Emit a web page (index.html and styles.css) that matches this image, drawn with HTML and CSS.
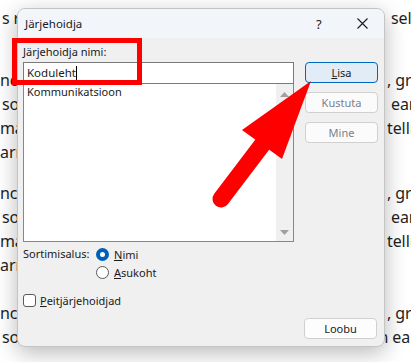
FILE: index.html
```html
<!DOCTYPE html>
<html lang="et">
<head>
  <meta charset="UTF-8">
  <meta name="viewport" content="width=device-width, initial-scale=1.0">
  <title>Järjehoidja</title>
  <link rel="stylesheet" href="styles.css">
</head>
<body>

<!-- document behind the dialog -->
<div class="doc">
  <div class="para first">
    <div class="line"><span class="left pad">s r</span><span class="right">&nbsp;self</span></div>
  </div>
  <div class="para">
    <div class="line"><span class="left">nce</span><span class="right">, grunts</span></div>
    <div class="line"><span class="left pad">sou</span><span class="right">&nbsp;ears</span></div>
    <div class="line"><span class="left">many</span><span class="right">telligent</span></div>
    <div class="line"><span class="left">arn</span><span class="right"></span></div>
  </div>
  <div class="para">
    <div class="line"><span class="left">nce</span><span class="right">, grunts</span></div>
    <div class="line"><span class="left pad">sou</span><span class="right">&nbsp;ears</span></div>
    <div class="line"><span class="left">many</span><span class="right">telligent</span></div>
    <div class="line"><span class="left">arn</span><span class="right"></span></div>
  </div>
  <div class="para last">
    <div class="line"><span class="left">nce</span><span class="right">, grunts</span></div>
    <div class="full">sounds too faint or too high in frequency for human ears</div>
  </div>
</div>

<div class="dialog">
  <div class="titlebar">
    <span class="title">Järjehoidja</span>
    <span class="help">?</span>
    <span class="close">
      <svg width="11" height="11" viewBox="0 0 11 11"><path d="M0.5 0.5 L10.5 10.5 M10.5 0.5 L0.5 10.5" stroke="#1a1a1a" stroke-width="1.1" fill="none"/></svg>
    </span>
  </div>

  <div class="content">
    <div class="left-col">
      <div class="field-label"><u>J</u>ärjehoidja nimi:</div>
      <div class="input">Koduleht<span class="caret"></span></div>
      <div class="listbox">
        <div class="items">
          <div class="item">Kommunikatsioon</div>
        </div>
        <div class="scrollbar">
          <svg width="9" height="5" viewBox="0 0 9 5"><path d="M0 5 L4.5 0 L9 5 Z" fill="#a0a0a0"/></svg>
          <svg width="9" height="5" viewBox="0 0 9 5"><path d="M0 0 L4.5 5 L9 0 Z" fill="#a0a0a0"/></svg>
        </div>
      </div>
      <div class="sort-row">
        <span class="sort-label">Sortimisalus:</span>
        <div class="radios">
          <div class="option"><span class="radio checked"></span><span><u>N</u>imi</span></div>
          <div class="option"><span class="radio"></span><span><u>A</u>sukoht</span></div>
        </div>
      </div>
      <div class="option check-row"><span class="checkbox"></span><span><u>P</u>eitjärjehoidjad</span></div>
    </div>

    <div class="right-col">
      <button class="btn primary"><u>L</u>isa</button>
      <button class="btn disabled">Kustuta</button>
      <button class="btn disabled">Mine</button>
    </div>
  </div>

  <div class="footer">
    <button class="btn">Loobu</button>
  </div>
</div>

<!-- annotation overlays -->
<div class="highlight"></div>
<svg class="arrow" width="411" height="362" viewBox="0 0 411 362">
  <line x1="221" y1="199" x2="262" y2="145" stroke="#ff0000" stroke-width="17" stroke-linecap="round"/>
  <polygon points="311,81 242,130 282,159" fill="#ff0000"/>
</svg>

</body>
</html>
```

FILE: styles.css
```css
html, body {
  margin: 0;
  padding: 0;
  overflow: hidden;
}
body {
  width: 411px;
  height: 362px;
  background: #fff;
  font-family: "Noto Sans", Arial, sans-serif;
  position: relative;
}

/* document text */
.doc {
  font-size: 16px;
  line-height: 24px;
  color: #1f1f1f;
  padding-top: 6px;
  letter-spacing: -0.1px;
}
.para {
  margin-bottom: 17px;
}
.para.first {
  margin-bottom: 38px;
}
.para.last {
  margin-top: 24px;
}
.line {
  display: grid;
  grid-template-columns: 387px 60px;
  white-space: nowrap;
}
.line .left {
  justify-self: start;
}
.line .pad {
  padding-left: 2px;
}
.full {
  white-space: nowrap;
  padding-left: 2px;
}

/* dialog */
.dialog {
  position: absolute;
  left: 17px;
  top: 8px;
  width: 368px;
  height: 339px;
  box-sizing: border-box;
  border: 1px solid #c4c4c4;
  border-radius: 8px;
  background: #f0f0f0;
  box-shadow: 0 6px 22px rgba(0, 0, 0, 0.28);
  display: flex;
  flex-direction: column;
  overflow: hidden;
  font-size: 11px;
  color: #1a1a1a;
}
.titlebar {
  height: 29px;
  background: #f2f5fa;
  display: flex;
  align-items: center;
  padding-left: 7px;
  font-size: 11.5px;
}
.title {
  flex: 1;
}
.help {
  width: 20px;
  font-size: 13px;
}
.close {
  width: 11px;
  height: 11px;
  margin: 0 16px 0 21px;
  display: flex;
}

.content {
  display: flex;
  padding: 6px 0 0 5px;
}
.left-col {
  width: 271px;
}
.field-label {
  height: 16px;
  line-height: 16px;
  margin-bottom: 2px;
}
.input {
  height: 20px;
  line-height: 20px;
  border: 1px solid #7a7a7a;
  background: #fff;
  padding-left: 3px;
  display: flex;
  align-items: center;
  font-size: 11.5px;
}
.caret {
  width: 1px;
  height: 15px;
  background: #000;
}
.listbox {
  height: 158px;
  box-sizing: border-box;
  border: 1px solid #828790;
  border-top: none;
  background: #fff;
  display: flex;
}
.items {
  flex: 1;
  padding-left: 3px;
}
.item {
  line-height: 16px;
}
.scrollbar {
  width: 17px;
  background: #f0f0f0;
  display: flex;
  flex-direction: column;
  justify-content: space-between;
  align-items: center;
  padding: 8px 0 6px;
}

.sort-row {
  display: flex;
  margin-top: 3px;
}
.sort-label {
  width: 73px;
  line-height: 18px;
}
.option {
  display: flex;
  align-items: center;
  height: 18px;
}
.radio {
  width: 13px;
  height: 13px;
  box-sizing: border-box;
  border: 1px solid #5a5a5a;
  border-radius: 50%;
  background: #fff;
  margin-right: 5px;
}
.radio.checked {
  border: 4px solid #005fb8;
}
.check-row {
  margin-top: 10px;
}
.checkbox {
  width: 13px;
  height: 13px;
  box-sizing: border-box;
  border: 1px solid #5a5a5a;
  border-radius: 3px;
  background: #fff;
  margin-right: 4px;
}

.right-col {
  margin-left: 11px;
  padding-top: 18px;
  display: flex;
  flex-direction: column;
  gap: 9px;
}
.btn {
  width: 73px;
  height: 21px;
  padding: 0;
  border: 1px solid #d0d0d0;
  border-radius: 4px;
  background: #fdfdfd;
  font-family: inherit;
  font-size: 11px;
  color: #1a1a1a;
}
.btn.primary {
  border-color: #0067c0;
  background: #e1ecf7;
}
.btn.disabled {
  color: #7a7f8c;
  background: #fbfbfb;
}
.footer {
  margin-top: auto;
  display: flex;
  justify-content: flex-end;
  padding: 0 7px 7px 0;
}

/* red annotation */
.highlight {
  position: absolute;
  left: 12px;
  top: 38px;
  width: 130px;
  height: 47px;
  box-sizing: border-box;
  border: 5px solid #ff0000;
}
.arrow {
  position: absolute;
  left: 0;
  top: 0;
}
```
